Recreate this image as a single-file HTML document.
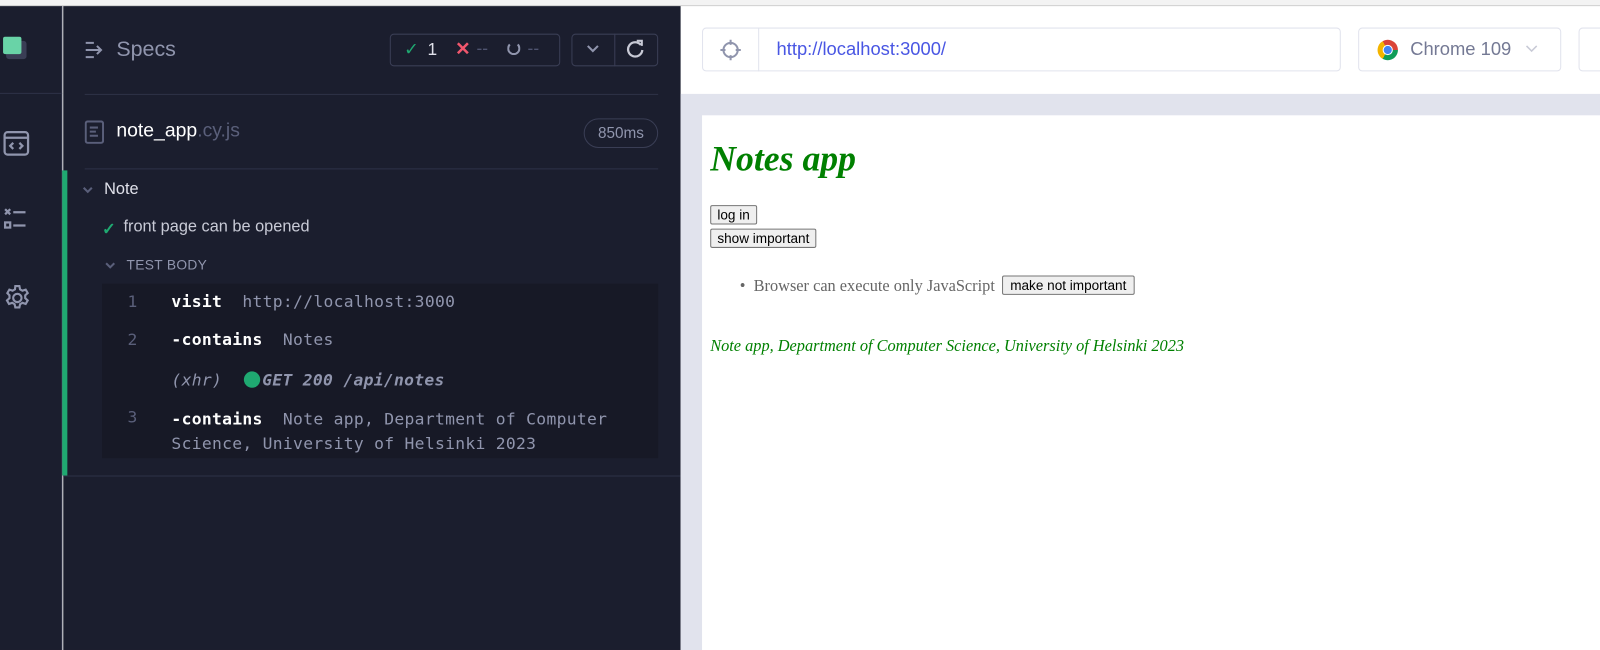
<!DOCTYPE html><html><head><style>
*{box-sizing:border-box;margin:0;padding:0}
body{width:1600px;height:637px;overflow:hidden;background:#fff;font-family:"Liberation Sans",sans-serif;position:relative}
#w{position:absolute;left:0;top:0;width:1568px;height:624px;transform:scale(1.0204);transform-origin:0 0}
.a{position:absolute}
.mono{font-family:"DejaVu Sans Mono","Liberation Mono",monospace;font-size:16px;letter-spacing:.3px;white-space:nowrap}
</style></head><body><div id="w">
<div class="a" style="left:0;top:0;width:1600px;height:6px;background:#f3f3f3;border-bottom:1px solid #d0d0d0"></div>
<div class="a" style="left:0;top:6px;width:61px;height:631px;background:#1b1e2e;border-right:1px solid #2e3247"></div>
<div class="a" style="left:0;top:91px;width:61px;height:1px;background:#2e3247"></div>
<div class="a" style="left:6px;top:40px;width:20px;height:18px;background:#3a3e55;border-radius:3px"></div>
<div class="a" style="left:3px;top:36px;width:18px;height:17px;background:#69d3a7;border-radius:2px"></div>
<svg class="a" style="left:3px;top:128px" width="28" height="26" viewBox="0 0 28 26" fill="none" stroke="#9095ad" stroke-width="2.2"><rect x="1.5" y="1.5" width="23" height="22" rx="3"/><line x1="1.5" y1="7" x2="24.5" y2="7"/><path d="M10 12l-3 3 3 3M16 12l3 3-3 3"/></svg>
<svg class="a" style="left:3px;top:203px" width="28" height="24" fill="none" stroke="#9095ad" stroke-width="2.2"><path d="M2 2l5 5M7 2l-5 5M10 5h12"/><rect x="2" y="15" width="5" height="5"/><path d="M10 18h12"/></svg>
<svg class="a" style="left:3px;top:278px" width="28" height="28" viewBox="0 0 24 24" fill="none" stroke="#9095ad" stroke-width="1.8"><circle cx="12" cy="12" r="3.5"/><path d="M10.3 2h3.4l.6 2.8 2 1.1 2.7-.9 1.7 2.9-2.1 1.9v2.4l2.1 1.9-1.7 2.9-2.7-.9-2 1.1-.6 2.8h-3.4l-.6-2.8-2-1.1-2.7.9-1.7-2.9 2.1-1.9V9.8L3.6 7.9l1.7-2.9 2.7.9 2-1.1z"/></svg>
<div class="a" style="left:62px;top:6px;width:605px;height:631px;background:#1b1e2e"></div>
<svg class="a" style="left:83px;top:40px" width="20" height="18" fill="none" stroke="#9095ad" stroke-width="2"><path d="M1 2h8M1 9h14M1 16h8M12 5l4 4-4 4"/></svg>
<div class="a" style="left:114px;top:37px;color:#9095ad;font-size:21px">Specs</div>
<div class="a" style="left:382px;top:33px;width:167px;height:32px;border:1px solid #3a3e55;border-radius:4px"></div>
<div class="a" style="left:396px;top:39px;color:#1fa971;font-size:17px">✓</div>
<div class="a" style="left:419px;top:39px;color:#e0e1ea;font-size:17px">1</div>
<div class="a" style="left:446px;top:38px;color:#f1576d;font-size:18px;font-weight:bold">✕</div>
<div class="a" style="left:467px;top:38px;color:#4f5470;font-size:17px">--</div>
<div class="a" style="left:497px;top:41px;width:13px;height:13px;border:2.5px solid #9095ad;border-top-color:transparent;border-radius:50%"></div>
<div class="a" style="left:517px;top:38px;color:#4f5470;font-size:17px">--</div>
<div class="a" style="left:560px;top:33px;width:85px;height:32px;border:1px solid #3a3e55;border-radius:4px"></div>
<div class="a" style="left:602px;top:33px;width:1px;height:32px;background:#3a3e55"></div>
<svg class="a" style="left:573px;top:42px" width="16" height="12" fill="none" stroke="#9095ad" stroke-width="2"><path d="M3 3l5 5 5-5"/></svg>
<svg class="a" style="left:613px;top:38px" width="20" height="20" fill="none" stroke="#c8cad6" stroke-width="2.2"><path d="M15 6a7 7 0 1 0 1.5 5"/><path d="M11 2h5v5" stroke-width="2"/></svg>
<div class="a" style="left:83px;top:92px;width:562px;height:1px;background:#2e3247"></div>
<svg class="a" style="left:83px;top:118px" width="19" height="23" fill="none" stroke="#5a5f7a" stroke-width="2"><rect x="1" y="1" width="17" height="21" rx="2"/><path d="M5 7h8M5 11h6M5 15h8"/></svg>
<div class="a" style="left:114px;top:118px;color:#fff;font-size:19px">note_app<span style="color:#5a5f7a">.cy.js</span></div>
<div class="a" style="left:572px;top:116px;width:73px;height:29px;border:1px solid #3a3e55;border-radius:15px;color:#9095ad;font-size:15px;text-align:center;line-height:27px">850ms</div>
<div class="a" style="left:83px;top:165px;width:562px;height:1px;background:#2e3247"></div>
<div class="a" style="left:61px;top:167px;width:5px;height:299px;background:#1fa971"></div>
<div class="a" style="left:62px;top:466px;width:605px;height:1px;background:#2e3247"></div>
<svg class="a" style="left:80px;top:182px" width="12" height="10" fill="none" stroke="#5a5f7a" stroke-width="2"><path d="M2 2l4 4 4-4"/></svg>
<div class="a" style="left:102px;top:177px;color:#e0e1ea;font-size:16px">Note</div>
<div class="a" style="left:100px;top:215px;color:#1fa971;font-size:16px;font-weight:bold">✓</div>
<div class="a" style="left:121px;top:214px;color:#c8cad6;font-size:16px">front page can be opened</div>
<svg class="a" style="left:102px;top:256px" width="12" height="10" fill="none" stroke="#5a5f7a" stroke-width="2"><path d="M2 2l4 4 4-4"/></svg>
<div class="a" style="left:124px;top:252px;color:#9095ad;font-size:13.5px;letter-spacing:.3px">TEST BODY</div>
<div class="a" style="left:100px;top:278px;width:545px;height:171px;background:#171926"></div>
<div class="a mono" style="left:125px;top:286px;color:#5a5f7a">1</div>
<div class="a mono" style="left:168px;top:286px;color:#fff;font-weight:bold">visit&nbsp; <span style="color:#9095ad;font-weight:normal">http://localhost:3000</span></div>
<div class="a mono" style="left:125px;top:323px;color:#5a5f7a">2</div>
<div class="a mono" style="left:168px;top:323px;color:#fff;font-weight:bold">-contains&nbsp; <span style="color:#9095ad;font-weight:normal">Notes</span></div>
<div class="a mono" style="left:168px;top:363px;color:#9095ad;font-style:italic">(xhr)</div>
<div class="a" style="left:239px;top:364px;width:16px;height:16px;border-radius:50%;background:#1fa971"></div>
<div class="a mono" style="left:257px;top:363px;color:#9095ad;font-style:italic;font-weight:bold">GET 200 /api/notes</div>
<div class="a mono" style="left:125px;top:399px;color:#5a5f7a">3</div>
<div class="a mono" style="left:168px;top:399px;color:#fff;font-weight:bold;line-height:24px">-contains&nbsp; <span style="color:#9095ad;font-weight:normal">Note app, Department of Computer</span></div>
<div class="a mono" style="left:168px;top:423px;color:#9095ad;line-height:24px">Science, University of Helsinki 2023</div>
<div class="a" style="left:688px;top:27px;width:626px;height:43px;border:1px solid #e1e3ed;border-radius:4px"></div>
<div class="a" style="left:743px;top:27px;width:1px;height:43px;background:#e1e3ed"></div>
<svg class="a" style="left:705px;top:38px" width="22" height="22" fill="none" stroke="#9095ad" stroke-width="2"><circle cx="11" cy="11" r="7"/><path d="M11 1v5M11 16v5M1 11h5M16 11h5"/></svg>
<div class="a" style="left:761px;top:38px;color:#4956e3;font-size:18px">http://localhost:3000/</div>
<div class="a" style="left:1331px;top:27px;width:199px;height:43px;border:1px solid #e1e3ed;border-radius:4px"></div>
<div class="a" style="left:1350px;top:39px;width:20px;height:20px;border-radius:50%;background:conic-gradient(from -30deg,#db4437 0 120deg,#0f9d58 120deg 240deg,#f4b400 240deg 360deg)"></div>
<div class="a" style="left:1355px;top:44px;width:10px;height:10px;border-radius:50%;background:#4285f4;border:1.5px solid #fff"></div>
<div class="a" style="left:1382px;top:38px;color:#747994;font-size:18px">Chrome 109</div>
<svg class="a" style="left:1495px;top:44px" width="12" height="8" fill="none" stroke="#c8cad6" stroke-width="1.5"><path d="M1 1l5 5 5-5"/></svg>
<div class="a" style="left:1547px;top:27px;width:60px;height:43px;border:1px solid #e1e3ed;border-radius:4px"></div>
<div class="a" style="left:667px;top:92px;width:933px;height:545px;background:#e1e3ed"></div>
<div class="a" style="left:688px;top:113px;width:912px;height:524px;background:#fff"></div>
<div class="a" style="left:696px;top:136px;color:#008000;font-family:'Liberation Serif',serif;font-size:35px;font-weight:bold;font-style:italic">Notes app</div>
<div class="a" style="left:696px;top:201px;border:1px solid #767676;background:#efefef;font-size:13.3px;padding:1px 6px;border-radius:2px">log in</div>
<div class="a" style="left:696px;top:224px;border:1px solid #767676;background:#efefef;font-size:13.3px;padding:1px 6px;border-radius:2px">show important</div>
<div class="a" style="left:725px;top:272px;color:#666;font-family:'Liberation Serif',serif;font-size:16px;white-space:nowrap">•&nbsp;&nbsp;Browser can execute only JavaScript</div>
<div class="a" style="left:982px;top:270px;border:1px solid #767676;background:#efefef;font-size:13.3px;padding:1px 7px;border-radius:2px">make not important</div>
<div class="a" style="left:696px;top:331px;color:#008000;font-family:'Liberation Serif',serif;font-size:16px;font-style:italic;white-space:nowrap">Note app, Department of Computer Science, University of Helsinki 2023</div>
</div></body></html>
